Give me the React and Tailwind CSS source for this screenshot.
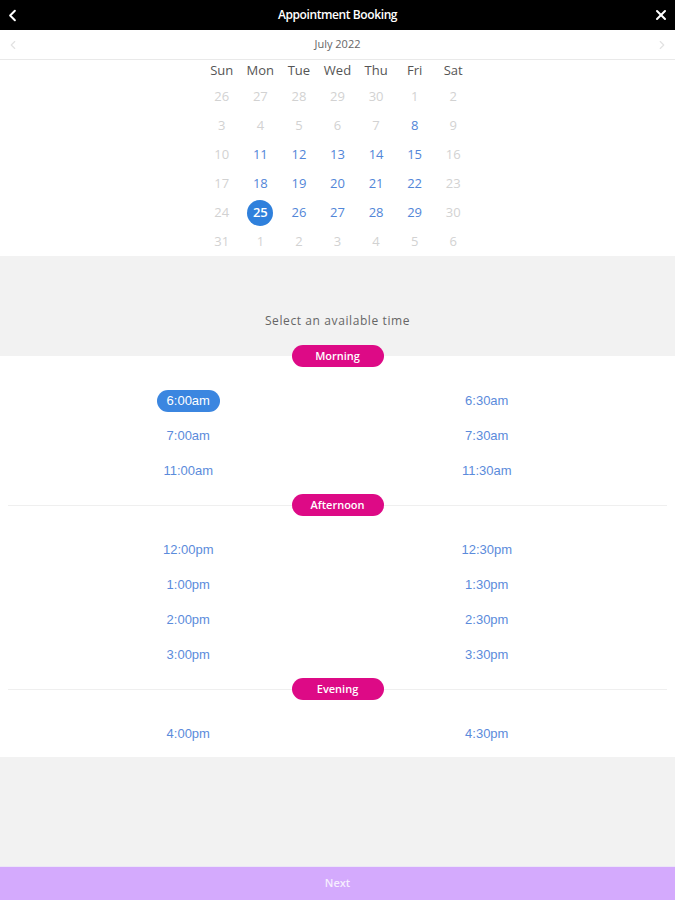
import React from "react";
import { ChevronLeft, ChevronRight, X } from "lucide-react";

const weekdays = ["Sun", "Mon", "Tue", "Wed", "Thu", "Fri", "Sat"];

// [day, state] state: 0 = other/disabled, 1 = available, 2 = selected
const weeks = [
  [[26, 0], [27, 0], [28, 0], [29, 0], [30, 0], [1, 0], [2, 0]],
  [[3, 0], [4, 0], [5, 0], [6, 0], [7, 0], [8, 1], [9, 0]],
  [[10, 0], [11, 1], [12, 1], [13, 1], [14, 1], [15, 1], [16, 0]],
  [[17, 0], [18, 1], [19, 1], [20, 1], [21, 1], [22, 1], [23, 0]],
  [[24, 0], [25, 2], [26, 1], [27, 1], [28, 1], [29, 1], [30, 0]],
  [[31, 0], [1, 0], [2, 0], [3, 0], [4, 0], [5, 0], [6, 0]],
];

const groups = [
  { label: "Morning", times: ["6:00am", "6:30am", "7:00am", "7:30am", "11:00am", "11:30am"] },
  { label: "Afternoon", times: ["12:00pm", "12:30pm", "1:00pm", "1:30pm", "2:00pm", "2:30pm", "3:00pm", "3:30pm"] },
  { label: "Evening", times: ["4:00pm", "4:30pm"] },
];

const selectedTime = "6:00am";

function GroupHeader({ label, first }) {
  return (
    <div
      className={
        first
          ? "h-[22px] flex items-center justify-center bg-[linear-gradient(#f2f2f2_50%,#ffffff_50%)]"
          : "relative h-[22px] flex items-center justify-center"
      }
    >
      {!first && <div className="absolute left-2 right-2 top-1/2 h-px bg-[#efefef]" />}
      <div className="relative w-[92px] h-[22px] rounded-full bg-[#dd0a86] flex items-center justify-center text-white text-[11px] font-semibold font-['Open_Sans',sans-serif]">
        {label}
      </div>
    </div>
  );
}

export default function App() {
  return (
    <div className="min-h-screen flex flex-col bg-[#f2f2f2] font-['Open_Sans',sans-serif]">
      {/* top bar */}
      <div className="h-[30px] bg-black flex items-center justify-between px-[3px] text-white">
        <ChevronLeft size={19} strokeWidth={2.5} />
        <span className="text-[12px] font-semibold tracking-[-0.4px]">Appointment Booking</span>
        <X size={16} strokeWidth={3} className="mr-[3px]" />
      </div>

      <div className="bg-white">
        {/* month switcher */}
        <div className="h-[30px] flex items-center justify-between px-[6px] border-b border-[#e9e9e9]">
          <ChevronLeft size={14} className="text-[#e2e2e2]" />
          <span className="text-[11px] text-[#666]">July 2022</span>
          <ChevronRight size={14} className="text-[#e2e2e2]" />
        </div>

        {/* calendar */}
        <div className="w-[270px] mx-auto">
          <div className="grid grid-cols-7 h-[22px] items-center text-center text-[13px] text-[#555]">
            {weekdays.map((d) => (
              <span key={d}>{d}</span>
            ))}
          </div>
          {weeks.map((week, i) => (
            <div key={i} className="grid grid-cols-7 h-[29px] items-center text-[13px]">
              {week.map(([day, state], j) => (
                <div key={j} className="flex justify-center">
                  {state === 2 ? (
                    <span className="w-[26px] h-[26px] rounded-full bg-[#2f80dc] text-white flex items-center justify-center font-semibold">
                      {day}
                    </span>
                  ) : (
                    <span className={state === 1 ? "text-[#5286d8]" : "text-[#d2d2d2]"}>{day}</span>
                  )}
                </div>
              ))}
            </div>
          ))}
        </div>
      </div>

      {/* prompt */}
      <div className="h-[89px] flex items-end justify-center pb-[15px]">
        <span className="text-[12px] text-[#666] tracking-[0.6px]">Select an available time</span>
      </div>

      {/* time slots */}
      <div className="bg-white">
        {groups.map((g, gi) => (
          <div key={g.label}>
            <GroupHeader label={g.label} first={gi === 0} />
            <div className="grid grid-cols-2 px-[39px] pt-[16px] pb-[6px] font-['Liberation_Sans',Arial,sans-serif] text-[13px]">
              {g.times.map((t) => (
                <div key={t} className="h-[35px] flex items-center justify-center">
                  {t === selectedTime ? (
                    <span className="h-[22px] px-[10px] rounded-full bg-[#3b86e0] text-white flex items-center">{t}</span>
                  ) : (
                    <span className="text-[#5b8bdb]">{t}</span>
                  )}
                </div>
              ))}
            </div>
          </div>
        ))}
      </div>

      <div className="flex-1" />

      {/* footer */}
      <div className="h-[34px] border-t border-[#ece6f7] bg-[#d4aafd] flex items-center justify-center">
        <span className="text-[11px] text-[#f6eefe] font-semibold">Next</span>
      </div>
    </div>
  );
}
